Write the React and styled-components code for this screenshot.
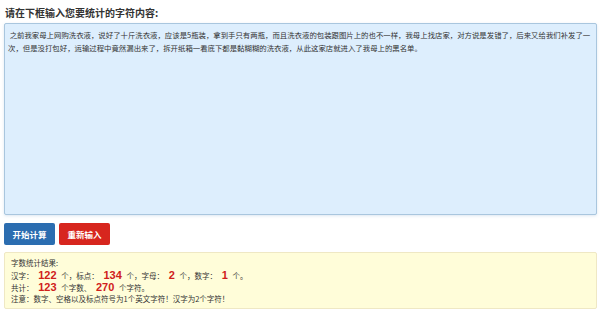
import React, { useState } from "react";
import styled, { createGlobalStyle } from "styled-components";

const GlobalStyle = createGlobalStyle`
	html, body {
		margin: 0;
		padding: 0;
		background: #ffffff;
	}
	body {
		font-family: "Liberation Sans", "Noto Sans CJK SC", sans-serif;
		color: #333;
	}
`;

const SAMPLE =
	" 之前我家母上网购洗衣液，说好了十斤洗衣液，应该是5瓶装，拿到手只有两瓶，而且洗衣液的包装跟图片上的也不一样，我母上找店家，对方说是发错了，后来又给我们补发了一次，但是没打包好，运输过程中竟然漏出来了，拆开纸箱一看底下都是黏糊糊的洗衣液，从此这家店就进入了我母上的黑名单。";

function App() {
	const [text, setText] = useState(SAMPLE);

	return (
		<Page>
			<GlobalStyle />
			<Title>请在下框输入您要统计的字符内容:</Title>
			<InputBox value={text} onChange={(e) => setText(e.target.value)} />
			<ButtonRow>
				<ActionButton color="#2b6db0">开始计算</ActionButton>
				<ActionButton color="#d7261e">重新输入</ActionButton>
			</ButtonRow>
			<ResultBox>
				<Line>字数统计结果:</Line>
				<Line>
					汉字： <Num>122</Num> 个，标点： <Num>134</Num> 个，字母：{" "}
					<Num>2</Num> 个，数字： <Num>1</Num> 个。
				</Line>
				<Line>
					共计： <Num>123</Num> 个字数、 <Num>270</Num> 个字符。
				</Line>
				<Line>注意：数字、空格以及标点符号为1个英文字符！汉字为2个字符！</Line>
			</ResultBox>
		</Page>
	);
}

export default App;

const Page = styled.div`
	width: 600px;
	height: 310px;
	box-sizing: border-box;
	padding: 3px 3px 0 4px;
	display: flex;
	flex-direction: column;
`;

const Title = styled.h3`
	margin: 0 0 0 1px;
	height: 19px;
	line-height: 19px;
	font-size: 10px;
	font-weight: bold;
	color: #333;
	font-family: "Noto Sans CJK SC", sans-serif;
`;

const InputBox = styled.textarea`
	margin-top: 1px;
	height: 192px;
	box-sizing: border-box;
	padding: 4px 1px 4px 3px;
	border: 1px solid #a9c6de;
	border-radius: 2px;
	background: #ddeefd;
	font-family: "Noto Sans CJK SC", sans-serif;
	font-size: 7.4px;
	line-height: 13px;
	color: #333;
	resize: none;
	outline: none;
	box-shadow: 0 1px 3px rgba(120, 160, 200, 0.25);
`;

const ButtonRow = styled.div`
	display: flex;
	gap: 4px;
	margin-top: 8px;
`;

const ActionButton = styled.button`
	width: 51px;
	height: 22px;
	border: none;
	border-radius: 2px;
	padding: 0;
	background: ${(props) => props.color};
	color: #fff;
	font-family: "Noto Sans CJK SC", sans-serif;
	font-size: 8.5px;
	font-weight: bold;
	cursor: pointer;
`;

const ResultBox = styled.div`
	margin-top: 7px;
	height: 57px;
	box-sizing: border-box;
	padding: 4px 6px 0;
	background: #fffdd9;
	border: 1px solid #efe8c4;
	border-radius: 2px;
	display: flex;
	flex-direction: column;
`;

const Line = styled.div`
	height: 12px;
	line-height: 12px;
	font-family: "Noto Sans CJK SC", sans-serif;
	font-size: 7.5px;
	color: #333;
	white-space: nowrap;
`;

const Num = styled.b`
	font-family: "Liberation Sans", sans-serif;
	font-size: 11px;
	color: #d0201b;
	margin: 0 3px;
`;
